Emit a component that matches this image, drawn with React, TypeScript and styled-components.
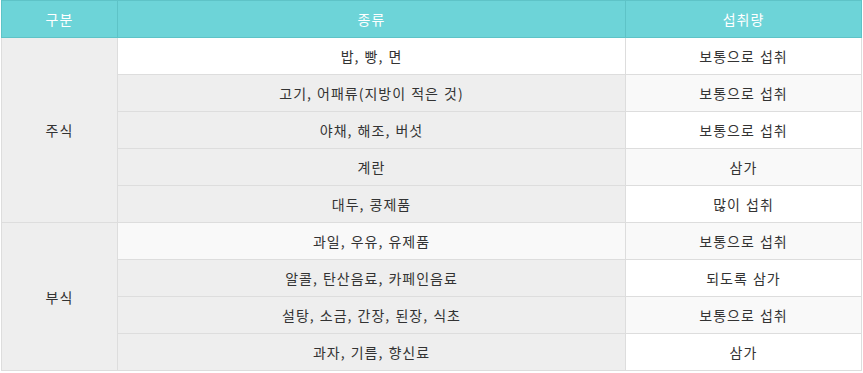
import React from 'react'
import styled, { createGlobalStyle } from 'styled-components'

const GlobalStyle = createGlobalStyle`
  html, body {
    margin: 0;
    padding: 0;
    background: #ffffff;
  }
  body {
    font-family: "Noto Sans CJK KR", "Noto Sans", sans-serif;
  }
`

const Wrapper = styled.div`
  padding-left: 1px;
`

const Table = styled.table`
  width: 860px;
  border-collapse: collapse;
  table-layout: fixed;
  font-size: 14px;
  letter-spacing: 1px;
  word-spacing: 1px;
  color: #333333;
`

const HeadCell = styled.th`
  height: 36px;
  padding: 0;
  background: #6dd4d8;
  border: 1px solid #5ec3c7;
  color: #ffffff;
  font-weight: 400;
  text-align: center;
`

const GroupCell = styled.th`
  padding: 0;
  background: #eeeeee;
  border: 1px solid #dddddd;
  font-weight: 400;
  text-align: center;
`

const Cell = styled.td<{ $tone: 'white' | 'stripe' | 'gray' }>`
  height: 36px;
  padding: 0;
  border: 1px solid #dddddd;
  text-align: center;
  background: ${p =>
    p.$tone === 'gray' ? '#eeeeee' : p.$tone === 'stripe' ? '#f9f9f9' : '#ffffff'};
`

interface Group {
  name: string
  rows: [string, string][]
}

const groups: Group[] = [
  {
    name: '주식',
    rows: [
      ['밥, 빵, 면', '보통으로 섭취'],
      ['고기, 어패류(지방이 적은 것)', '보통으로 섭취'],
      ['야채, 해조, 버섯', '보통으로 섭취'],
      ['계란', '삼가'],
      ['대두, 콩제품', '많이 섭취'],
    ],
  },
  {
    name: '부식',
    rows: [
      ['과일, 우유, 유제품', '보통으로 섭취'],
      ['알콜, 탄산음료, 카페인음료', '되도록 삼가'],
      ['설탕, 소금, 간장, 된장, 식초', '보통으로 섭취'],
      ['과자, 기름, 향신료', '삼가'],
    ],
  },
]

export default function App() {
  let index = 0
  return (
    <>
      <GlobalStyle />
      <Wrapper>
        <Table>
          <colgroup>
            <col style={{ width: '116px' }} />
            <col style={{ width: '508px' }} />
            <col style={{ width: '236px' }} />
          </colgroup>
          <thead>
            <tr>
              <HeadCell>구분</HeadCell>
              <HeadCell>종류</HeadCell>
              <HeadCell>섭취량</HeadCell>
            </tr>
          </thead>
          <tbody>
            {groups.map(group =>
              group.rows.map(([kind, amount], i) => {
                index += 1
                const stripe = index % 2 === 0 ? 'stripe' : 'white'
                return (
                  <tr key={kind}>
                    {i === 0 && (
                      <GroupCell rowSpan={group.rows.length}>{group.name}</GroupCell>
                    )}
                    <Cell $tone={i === 0 ? stripe : 'gray'}>{kind}</Cell>
                    <Cell $tone={stripe}>{amount}</Cell>
                  </tr>
                )
              }),
            )}
          </tbody>
        </Table>
      </Wrapper>
    </>
  )
}
